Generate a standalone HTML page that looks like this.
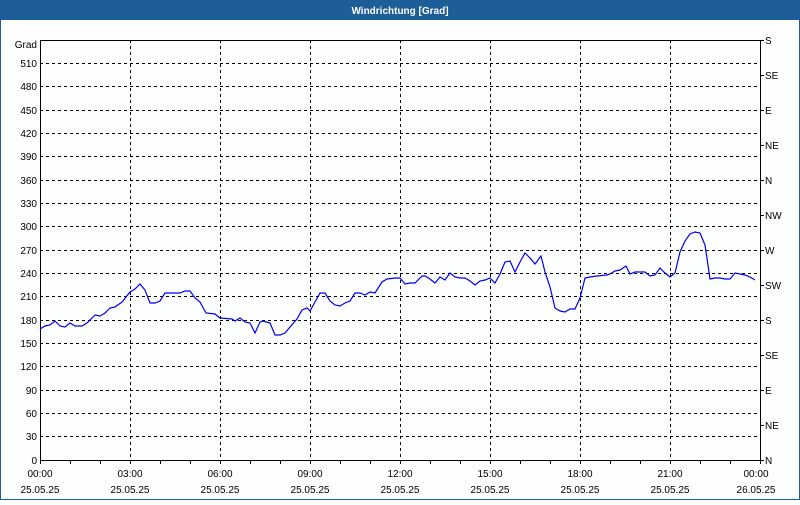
<!DOCTYPE html>
<html><head><meta charset="utf-8"><style>
html,body{margin:0;padding:0;}
body{width:800px;height:500px;overflow:hidden;background:#fff;}
svg text{font-family:"Liberation Sans",sans-serif;font-size:10px;fill:#000;}
</style></head><body>
<svg width="800" height="500" xmlns="http://www.w3.org/2000/svg">
<rect x="0" y="0" width="800" height="500" fill="#fdfefe"/>
<rect x="0" y="0" width="800" height="20" fill="#1d5e98"/>
<rect x="0" y="0" width="1" height="500" fill="#1d5e98"/>
<rect x="799" y="0" width="1" height="500" fill="#1d5e98"/>
<rect x="0" y="499" width="800" height="1" fill="#1d5e98"/>
<text x="400" y="14" text-anchor="middle" style="fill:#fff;font-weight:bold;font-size:10px">Windrichtung [Grad]</text>
<g stroke="#000" stroke-width="1" stroke-dasharray="3,3" shape-rendering="crispEdges">
<line x1="40" x2="760" y1="436.5" y2="436.5"/><line x1="40" x2="760" y1="413.5" y2="413.5"/>
<line x1="40" x2="760" y1="390.5" y2="390.5"/><line x1="40" x2="760" y1="366.5" y2="366.5"/>
<line x1="40" x2="760" y1="343.5" y2="343.5"/><line x1="40" x2="760" y1="320.5" y2="320.5"/>
<line x1="40" x2="760" y1="296.5" y2="296.5"/><line x1="40" x2="760" y1="273.5" y2="273.5"/>
<line x1="40" x2="760" y1="250.5" y2="250.5"/><line x1="40" x2="760" y1="226.5" y2="226.5"/>
<line x1="40" x2="760" y1="203.5" y2="203.5"/><line x1="40" x2="760" y1="180.5" y2="180.5"/>
<line x1="40" x2="760" y1="156.5" y2="156.5"/><line x1="40" x2="760" y1="133.5" y2="133.5"/>
<line x1="40" x2="760" y1="110.5" y2="110.5"/><line x1="40" x2="760" y1="86.5" y2="86.5"/>
<line x1="40" x2="760" y1="63.5" y2="63.5"/>
<line x1="130.5" x2="130.5" y1="40" y2="460"/><line x1="220.5" x2="220.5" y1="40" y2="460"/>
<line x1="310.5" x2="310.5" y1="40" y2="460"/><line x1="400.5" x2="400.5" y1="40" y2="460"/>
<line x1="490.5" x2="490.5" y1="40" y2="460"/><line x1="580.5" x2="580.5" y1="40" y2="460"/>
<line x1="670.5" x2="670.5" y1="40" y2="460"/>
</g>
<g stroke="#000" stroke-width="1" fill="none" shape-rendering="crispEdges">
<rect x="40.5" y="40.5" width="720" height="420"/>
<path d="M70.5 460v4M100.5 460v4M130.5 460v4M160.5 460v4M190.5 460v4M220.5 460v4M250.5 460v4M280.5 460v4M310.5 460v4M340.5 460v4M370.5 460v4M400.5 460v4M430.5 460v4M460.5 460v4M490.5 460v4M520.5 460v4M550.5 460v4M580.5 460v4M610.5 460v4M640.5 460v4M670.5 460v4M700.5 460v4M730.5 460v4M760.5 460v4M40.5 460v4"/>
<path d="M760 40.5h4M760 75.5h4M760 110.5h4M760 145.5h4M760 180.5h4M760 215.5h4M760 250.5h4M760 285.5h4M760 320.5h4M760 355.5h4M760 390.5h4M760 425.5h4M760 460.5h4"/>
</g>
<polyline fill="none" stroke="#0000ee" stroke-width="1.2" points="40,329 45,326 50,325 55,321 60,326 65,327 70,323 75,326 82,326 87,323 95,315 100,316 105,313 110,308 115,307 122,302 130,292 135,289 140,284 145,290 150,303 155,303 160,301 165,293 170,293 175,293 180,293 185,291 190,291 195,298 200,302 206,313 215,314 220,318 232,319 235,321 240,318 245,322 250,323 255,333 260,322 263,321 270,323 275,335 280,335 285,333 290,327 297,319 302,310 307,308 310,311 315,302 320,293 325,293 330,301 335,305 340,306 345,303 350,301 355,293 360,293 365,295 370,292 375,293 382,282 387,279 395,278 400,278 405,284 410,283 415,283 422,276 425,276 430,279 435,283 440,277 445,280 450,273 455,277 460,278 465,278 470,281 475,285 480,281 485,280 490,278 495,283 500,274 505,262 510,261 515,272 520,262 525,253 530,258 535,264 541,256 545,272 550,287 555,308 560,311 565,312 570,309 575,309 580,298 585,278 590,277 597,276 607,275 610,274 615,271 620,270 626,266 630,274 635,272 645,272 650,276 655,275 660,268 665,273 670,277 675,273 680,252 685,241 690,234 695,232 700,233 705,245 710,279 715,278 720,278 725,279 730,279 735,273 740,274 745,275 750,277 755,280"/>
<g text-anchor="end">
<text x="37" y="48">Grad</text>
<text x="37" y="67">510</text><text x="37" y="90">480</text><text x="37" y="114">450</text>
<text x="37" y="137">420</text><text x="37" y="160">390</text><text x="37" y="184">360</text>
<text x="37" y="207">330</text><text x="37" y="230">300</text><text x="37" y="254">270</text>
<text x="37" y="277">240</text><text x="37" y="300">210</text><text x="37" y="324">180</text>
<text x="37" y="347">150</text><text x="37" y="370">120</text><text x="37" y="394">90</text>
<text x="37" y="417">60</text><text x="37" y="440">30</text><text x="37" y="464">0</text>
</g>
<g>
<text x="765" y="44">S</text><text x="765" y="79">SE</text><text x="765" y="114">E</text>
<text x="765" y="149">NE</text><text x="765" y="184">N</text><text x="765" y="219">NW</text>
<text x="765" y="254">W</text><text x="765" y="289">SW</text><text x="765" y="324">S</text>
<text x="765" y="359">SE</text><text x="765" y="394">E</text><text x="765" y="429">NE</text>
<text x="765" y="464">N</text>
</g>
<g text-anchor="middle">
<text x="40" y="477">00:00</text><text x="40" y="493">25.05.25</text>
<text x="130" y="477">03:00</text><text x="130" y="493">25.05.25</text>
<text x="220" y="477">06:00</text><text x="220" y="493">25.05.25</text>
<text x="310" y="477">09:00</text><text x="310" y="493">25.05.25</text>
<text x="400" y="477">12:00</text><text x="400" y="493">25.05.25</text>
<text x="490" y="477">15:00</text><text x="490" y="493">25.05.25</text>
<text x="580" y="477">18:00</text><text x="580" y="493">25.05.25</text>
<text x="670" y="477">21:00</text><text x="670" y="493">25.05.25</text>
<text x="756" y="477">00:00</text><text x="756" y="493">26.05.25</text>
</g>
</svg>
</body></html>
